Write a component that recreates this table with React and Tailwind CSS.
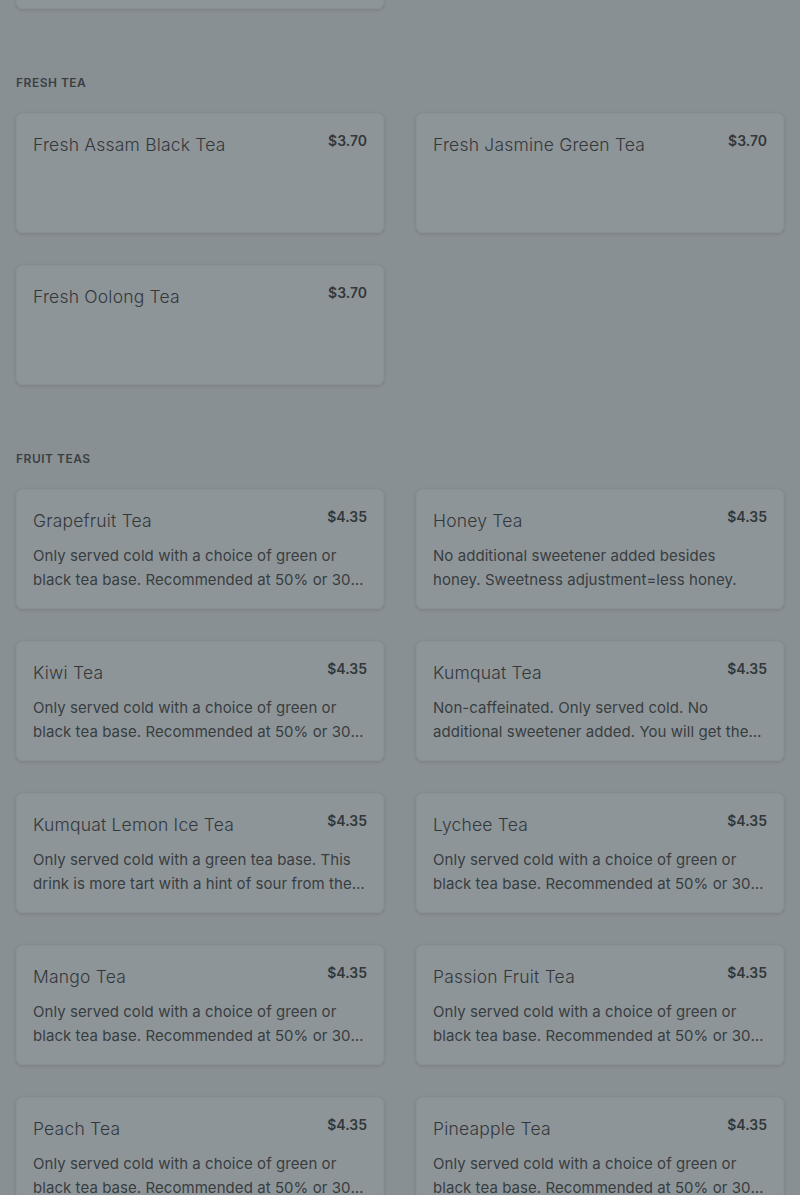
import React from "react";

const FRUIT_DESC =
  "Only served cold with a choice of green or black tea base. Recommended at 50% or 30% sweetness for the best taste.";

const sections = [
  {
    title: "Fresh Tea",
    items: [
      { name: "Fresh Assam Black Tea", price: "$3.70" },
      { name: "Fresh Jasmine Green Tea", price: "$3.70" },
      { name: "Fresh Oolong Tea", price: "$3.70" },
    ],
  },
  {
    title: "Fruit Teas",
    items: [
      { name: "Grapefruit Tea", price: "$4.35", desc: FRUIT_DESC },
      {
        name: "Honey Tea",
        price: "$4.35",
        desc: "No additional sweetener added besides honey. Sweetness adjustment=less honey.",
      },
      { name: "Kiwi Tea", price: "$4.35", desc: FRUIT_DESC },
      {
        name: "Kumquat Tea",
        price: "$4.35",
        desc: "Non-caffeinated. Only served cold. No additional sweetener added. You will get the natural taste of kumquat.",
      },
      {
        name: "Kumquat Lemon Ice Tea",
        price: "$4.35",
        desc: "Only served cold with a green tea base. This drink is more tart with a hint of sour from the lemon.",
      },
      { name: "Lychee Tea", price: "$4.35", desc: FRUIT_DESC },
      { name: "Mango Tea", price: "$4.35", desc: FRUIT_DESC },
      { name: "Passion Fruit Tea", price: "$4.35", desc: FRUIT_DESC },
      { name: "Peach Tea", price: "$4.35", desc: FRUIT_DESC },
      { name: "Pineapple Tea", price: "$4.35", desc: FRUIT_DESC },
    ],
  },
];

function Card({ item }) {
  return (
    <div className="h-[120px] overflow-hidden rounded-md border border-[#8a9195] bg-[#8e9599] px-4 pt-4 shadow-[0_1px_4px_rgba(0,0,0,0.12)]">
      <div className="flex items-start justify-between gap-4">
        <div className="text-[17.5px] font-[350] leading-[30px] tracking-[0.2px] text-[#33383b]">{item.name}</div>
        <div className="pt-[1px] text-[14px] font-semibold leading-[20px] text-[#33383b]">{item.price}</div>
      </div>
      <p className="mt-[8px] line-clamp-2 pr-[1px] text-[15px] leading-[24px] tracking-[0.06px] text-[#383d40]">
        {item.desc}
      </p>
    </div>
  );
}

export default function App() {
  return (
    <div
      className="min-h-[1195px] bg-[#899094] px-4"
      style={{ fontFamily: "Inter, 'Noto Sans', sans-serif" }}
    >
      <div className="grid grid-cols-2 gap-8">
        <div className="-mt-[111px] h-[120px] rounded-md border border-[#8a9195] bg-[#8e9599] shadow-[0_1px_4px_rgba(0,0,0,0.12)]" />
      </div>
      {sections.map((s) => (
        <section key={s.title} className="pt-16">
          <h2 className="mb-5 text-[12px] font-semibold uppercase leading-[20px] tracking-[0.5px] text-[#3a3f42]">
            {s.title}
          </h2>
          <div className="grid grid-cols-2 gap-8">
            {s.items.map((it) => (
              <Card key={it.name} item={it} />
            ))}
          </div>
        </section>
      ))}
    </div>
  );
}
